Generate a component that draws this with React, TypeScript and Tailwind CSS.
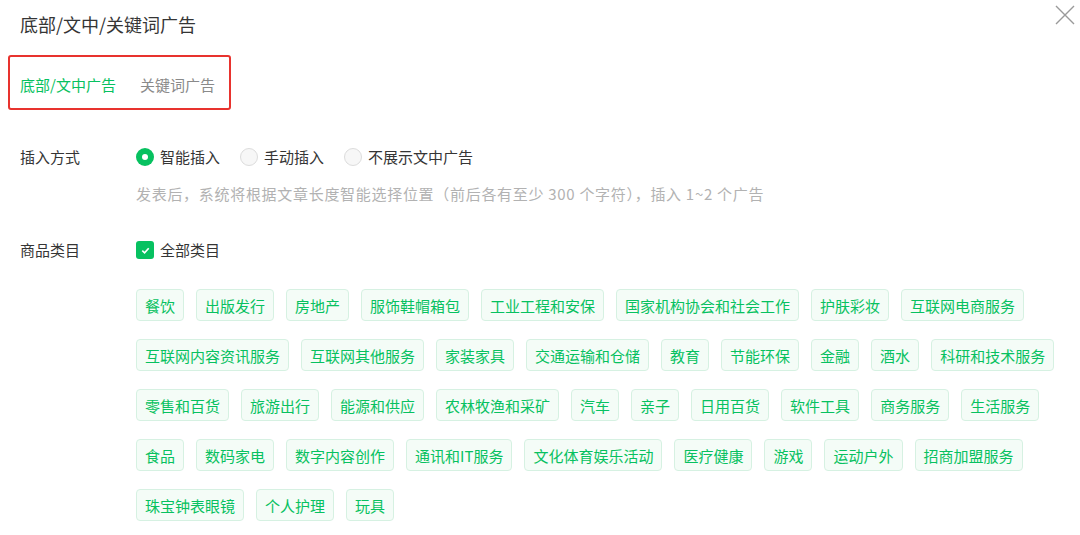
import { useState } from 'react';

const GREEN = '#07c160';

const CATEGORIES = [
  '餐饮', '出版发行', '房地产', '服饰鞋帽箱包', '工业工程和安保', '国家机构协会和社会工作', '护肤彩妆', '互联网电商服务',
  '互联网内容资讯服务', '互联网其他服务', '家装家具', '交通运输和仓储', '教育', '节能环保', '金融', '酒水', '科研和技术服务',
  '零售和百货', '旅游出行', '能源和供应', '农林牧渔和采矿', '汽车', '亲子', '日用百货', '软件工具', '商务服务', '生活服务',
  '食品', '数码家电', '数字内容创作', '通讯和IT服务', '文化体育娱乐活动', '医疗健康', '游戏', '运动户外', '招商加盟服务',
  '珠宝钟表眼镜', '个人护理', '玩具',
];

const INSERT_MODES = ['智能插入', '手动插入', '不展示文中广告'];

function Radio({ checked }: { checked: boolean }) {
  if (checked) {
    return (
      <span className="flex h-[18px] w-[18px] items-center justify-center rounded-full bg-[#07c160]">
        <span className="h-[6px] w-[6px] rounded-full bg-white" />
      </span>
    );
  }
  return <span className="h-[18px] w-[18px] rounded-full border border-[#dcdcdc] bg-[#f7f7f7]" />;
}

export default function App() {
  const [mode, setMode] = useState(0);
  const [tab, setTab] = useState(0);

  return (
    <div
      className="relative h-[535px] w-[1080px] overflow-hidden bg-white text-[15px] text-[#353535]"
      style={{ fontFamily: '"Noto Sans CJK SC", "Noto Sans", sans-serif' }}
    >
      {/* Close */}
      <button className="absolute right-[5px] top-[5px] h-[20px] w-[20px]">
        <svg viewBox="0 0 20 20" className="h-[20px] w-[20px]" stroke="#9a9a9a" strokeWidth="1.4" fill="none">
          <path d="M1 1L19 19M19 1L1 19" />
        </svg>
      </button>

      <div className="pl-5 pt-3">
        <h1 className="h-6 text-[18px] leading-6 font-normal text-[#353535]">底部/文中/关键词广告</h1>
      </div>

      {/* Tabs (annotated) */}
      <div className="ml-2 mt-[19px] flex h-[55px] w-[223px] items-center gap-6 rounded-[3px] border-2 border-[#e8332e] pl-[10px] pt-[5px]">
        {['底部/文中广告', '关键词广告'].map((t, i) => (
          <button
            key={t}
            onClick={() => setTab(i)}
            className={tab === i ? 'leading-[22px] text-[#07c160]' : 'leading-[22px] text-[#8a8a8a]'}
          >
            {t}
          </button>
        ))}
      </div>

      {/* Insert mode */}
      <div className="mt-[36px] flex pl-5">
        <div className="w-[116px] leading-[22px]">插入方式</div>
        <div className="flex flex-col">
          <div className="flex items-center">
            {INSERT_MODES.map((m, i) => (
              <label
                key={m}
                onClick={() => setMode(i)}
                className="mr-[20px] flex cursor-pointer items-center gap-[6px] leading-[22px]"
              >
                <Radio checked={mode === i} />
                <span>{m}</span>
              </label>
            ))}
          </div>
          <p className="mt-[16px] text-[15px] leading-5 tracking-[0.7px] text-[#b2b2b2]">
            发表后，系统将根据文章长度智能选择位置（前后各有至少 300 个字符），插入 1~2 个广告
          </p>
        </div>
      </div>

      {/* Categories */}
      <div className="mt-[35px] flex pl-5">
        <div className="w-[116px] leading-[22px]">商品类目</div>
        <div className="flex w-[940px] flex-col">
          <label className="flex items-center gap-[6px] leading-[22px]">
            <span className="flex h-[18px] w-[18px] items-center justify-center rounded-[3px] bg-[#07c160]">
              <svg viewBox="0 0 12 12" className="h-[11px] w-[11px]" fill="none" stroke="white" strokeWidth="1.8">
                <path d="M2.5 6.2L5 8.5L9.5 3.5" />
              </svg>
            </span>
            <span>全部类目</span>
          </label>
          <div className="mt-[28px] flex flex-wrap gap-x-3 gap-y-[18px]">
            {CATEGORIES.map((c) => (
              <span
                key={c}
                className="flex h-[32px] items-center rounded-[4px] border border-[#d6f1e2] bg-[#f4fcf7] px-2 leading-none"
                style={{ color: GREEN }}
              >
                {c}
              </span>
            ))}
          </div>
        </div>
      </div>
    </div>
  );
}
